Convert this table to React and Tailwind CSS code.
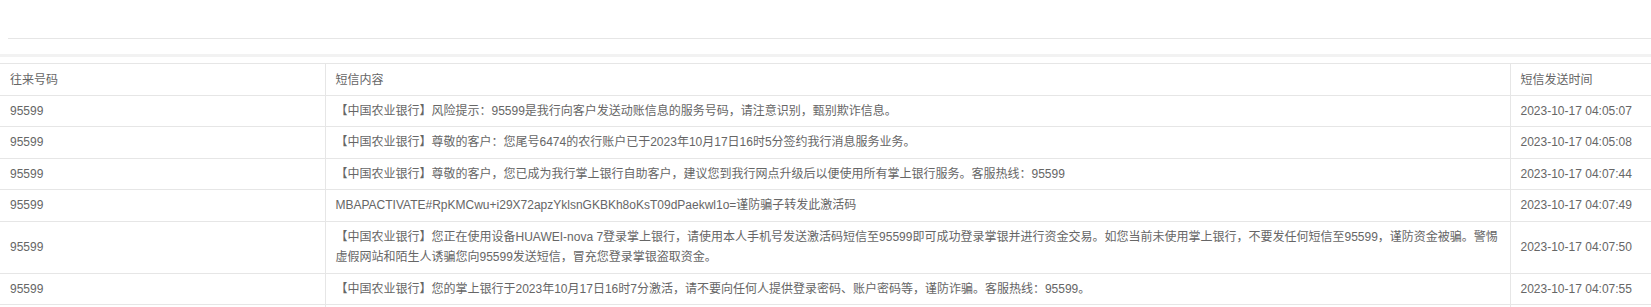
import React from "react";

const rows = [
  {
    num: "95599",
    text: "【中国农业银行】风险提示：95599是我行向客户发送动账信息的服务号码，请注意识别，甄别欺诈信息。",
    time: "2023-10-17 04:05:07",
  },
  {
    num: "95599",
    text: "【中国农业银行】尊敬的客户：您尾号6474的农行账户已于2023年10月17日16时5分签约我行消息服务业务。",
    time: "2023-10-17 04:05:08",
  },
  {
    num: "95599",
    text: "【中国农业银行】尊敬的客户，您已成为我行掌上银行自助客户，建议您到我行网点升级后以便使用所有掌上银行服务。客服热线：95599",
    time: "2023-10-17 04:07:44",
  },
  {
    num: "95599",
    text: "MBAPACTIVATE#RpKMCwu+i29X72apzYklsnGKBKh8oKsT09dPaekwl1o=谨防骗子转发此激活码",
    time: "2023-10-17 04:07:49",
  },
  {
    num: "95599",
    text: "【中国农业银行】您正在使用设备HUAWEI-nova 7登录掌上银行，请使用本人手机号发送激活码短信至95599即可成功登录掌银并进行资金交易。如您当前未使用掌上银行，不要发任何短信至95599，谨防资金被骗。警惕虚假网站和陌生人诱骗您向95599发送短信，冒充您登录掌银盗取资金。",
    time: "2023-10-17 04:07:50",
  },
  {
    num: "95599",
    text: "【中国农业银行】您的掌上银行于2023年10月17日16时7分激活，请不要向任何人提供登录密码、账户密码等，谨防诈骗。客服热线：95599。",
    time: "2023-10-17 04:07:55",
  },
];

const cell = "px-[10px] py-[5px] leading-[20.5px] border-b border-[#e6e6e6] align-middle text-left font-normal";

export default function App() {
  return (
    <div
      className="w-full bg-white text-[12px] text-[#666]"
      style={{ fontFamily: '"Liberation Sans", Arial, "Noto Sans CJK SC", sans-serif' }}
    >
      {/* top bar */}
      <div className="h-[38px]" />
      <div className="ml-[8px] border-t border-[#e6e6e6] h-[16px]" />
      <div className="h-[3px] bg-[#f2f2f2]" />
      <div className="h-[6px]" />

      <table className="w-full border-collapse table-fixed">
        <colgroup>
          <col className="w-[325px]" />
          <col />
          <col className="w-[141px]" />
        </colgroup>
        <thead>
          <tr className="border-t border-[#e6e6e6]">
            <th className={`${cell} pt-[6px] pb-[4px]`}>往来号码</th>
            <th className={`${cell} pt-[6px] pb-[4px] border-l`}>短信内容</th>
            <th className={`${cell} pt-[6px] pb-[4px] border-l`}>短信发送时间</th>
          </tr>
        </thead>
        <tbody>
          {rows.map((r, i) => (
            <tr key={i}>
              <td className={cell}>{r.num}</td>
              <td className={`${cell} border-l`}>{r.text}</td>
              <td className={`${cell} border-l whitespace-nowrap`}>{r.time}</td>
            </tr>
          ))}
          {/* next row, below the fold */}
          <tr>
            <td className={cell}>&nbsp;</td>
            <td className={`${cell} border-l`}>&nbsp;</td>
            <td className={`${cell} border-l`}>&nbsp;</td>
          </tr>
        </tbody>
      </table>
    </div>
  );
}
